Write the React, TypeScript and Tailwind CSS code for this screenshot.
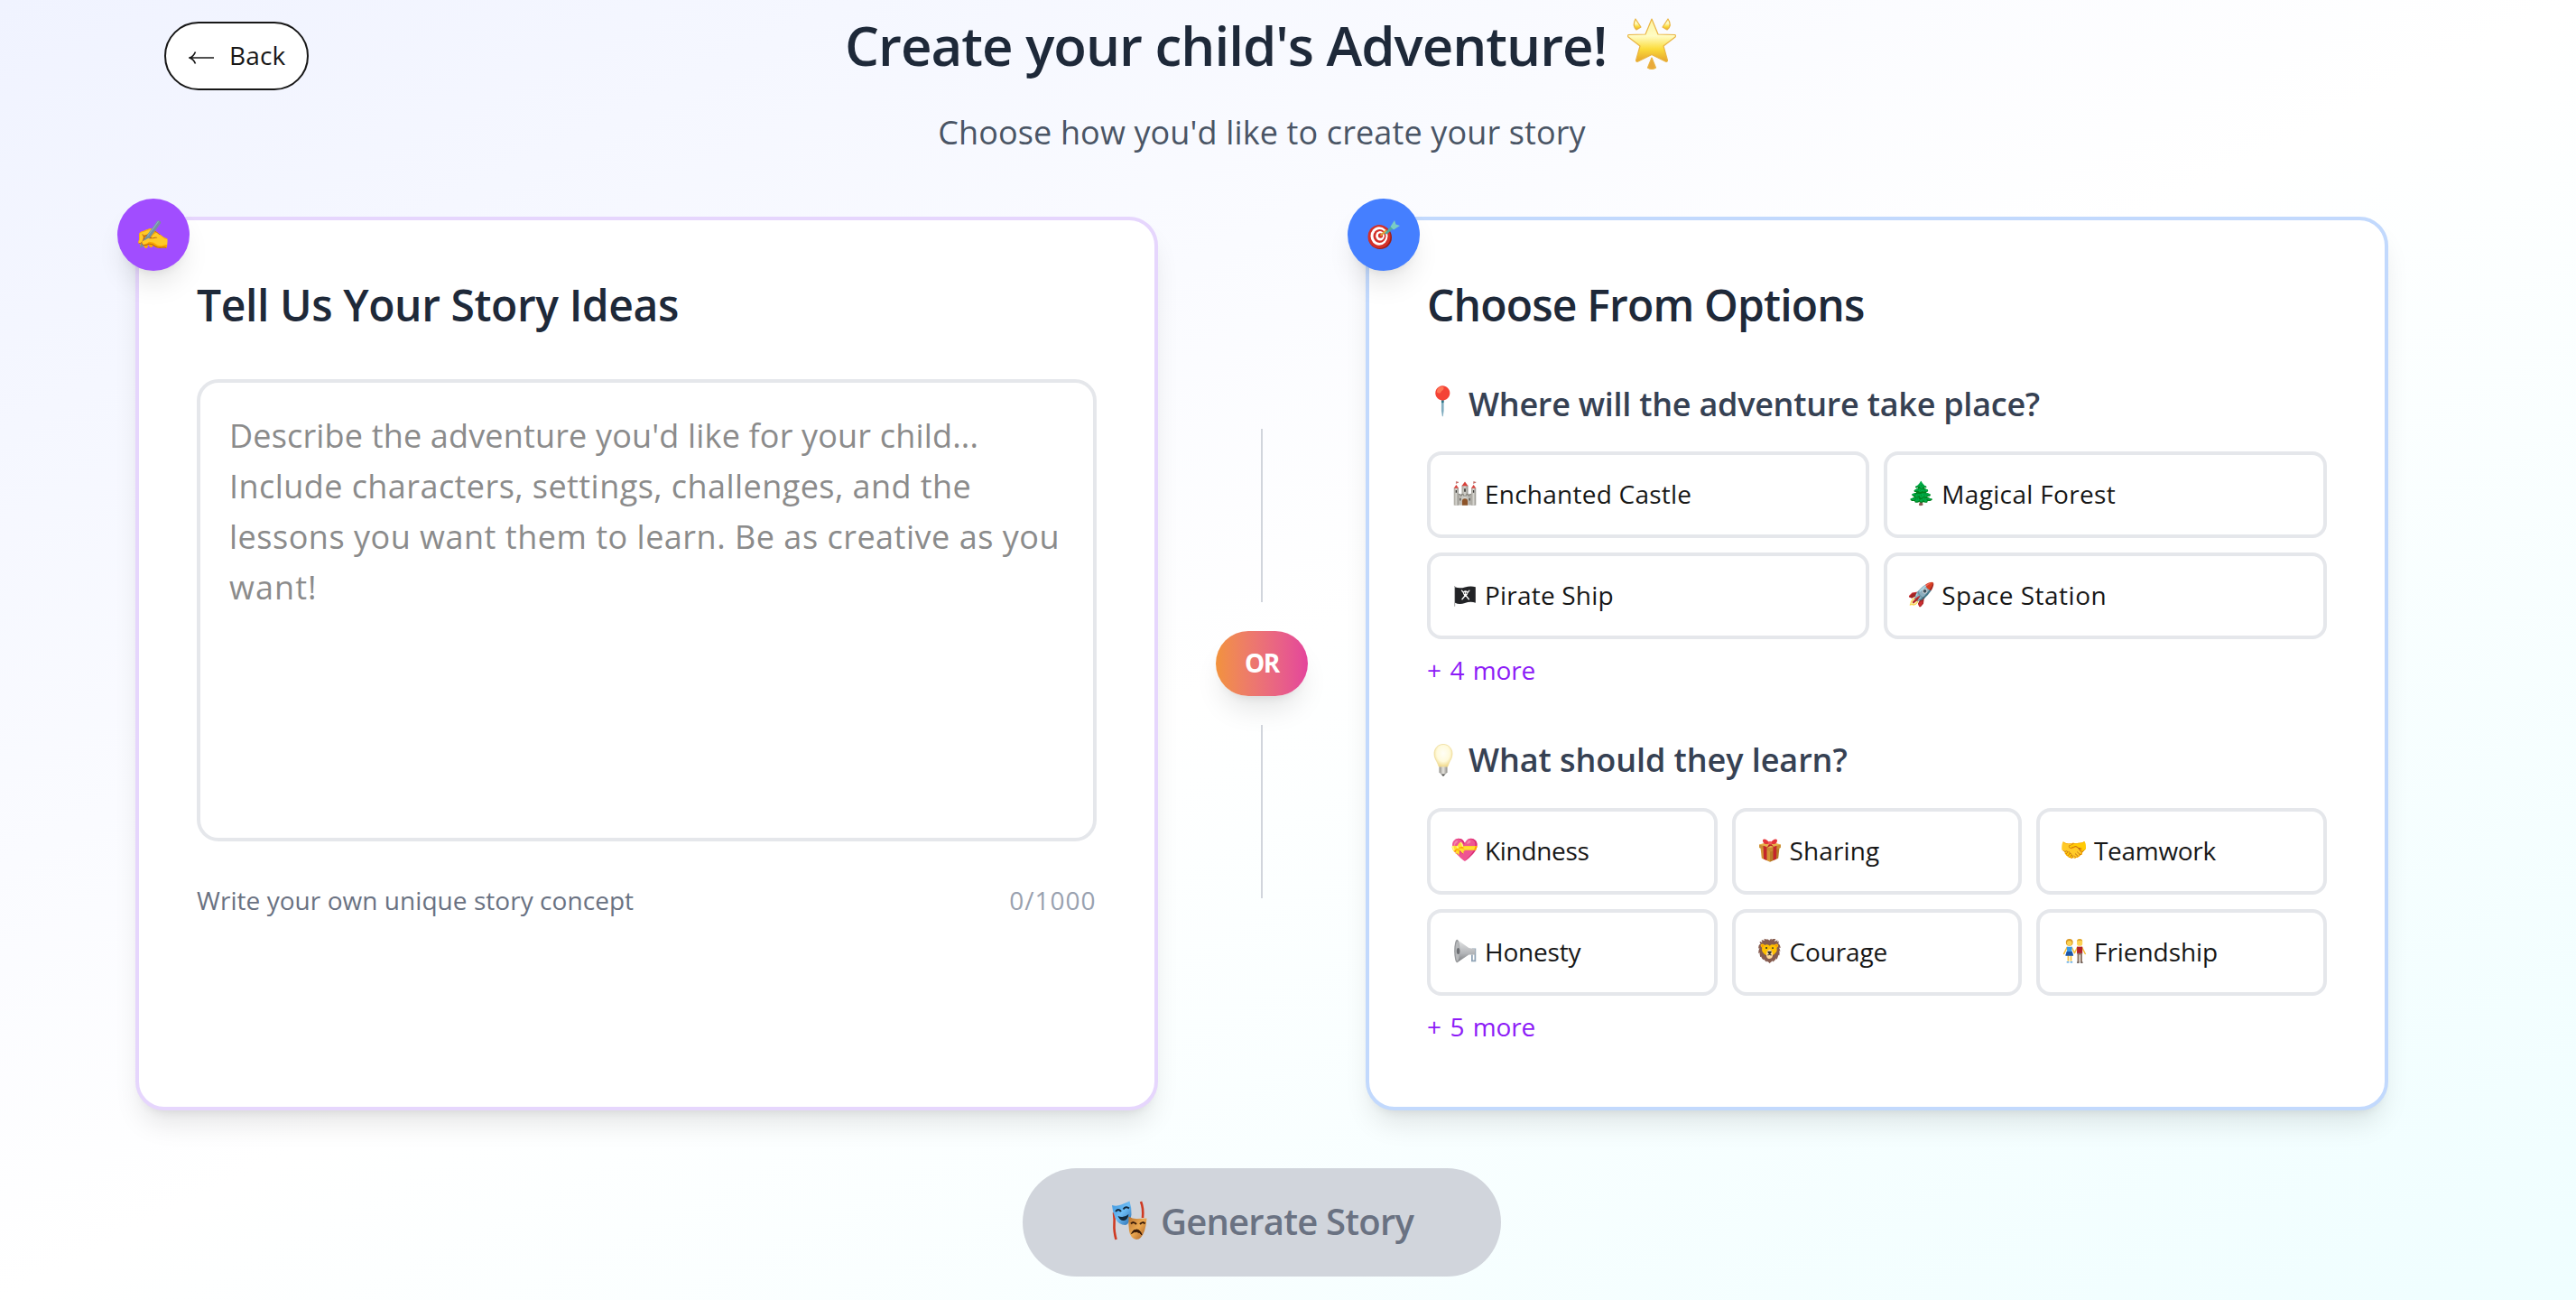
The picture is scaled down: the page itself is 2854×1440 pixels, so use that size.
import type { ReactNode } from "react";

const cardShadow = "shadow-[0_20px_30px_-6px_rgba(0,0,0,0.1),0_8px_12px_-8px_rgba(0,0,0,0.1)]";

/* ---------- Icons ---------- */

function StarIcon() {
  return (
    <svg viewBox="0 0 60 60" className="h-[60px] w-[60px] shrink-0">
      <defs>
        <linearGradient id="star" x1="0" y1="0" x2="0" y2="1">
          <stop offset="0" stopColor="#fdf3a0" />
          <stop offset="0.4" stopColor="#fffcc4" />
          <stop offset="0.7" stopColor="#fbdc3c" />
          <stop offset="1" stopColor="#e5a32c" />
        </linearGradient>
      </defs>
      <g fill="url(#star)" stroke="#eab543" strokeWidth="1.2" strokeLinejoin="round">
        <path d="M30 3 L37 20 L56 20.500 Q57 22 56 23 L43 33 L47.500 49 Q47 51 45 50 L30 42.500 L15 50 Q13 51 12.500 49 L17 33 L4 23 Q3 22 4 20.500 L23 20 Z" />
        <path d="M12 3 L18 12 L13 15 Q8 10 12 3 Z" />
        <path d="M48 3 L42 12 L47 15 Q53 10 48 3 Z" />
        <path d="M30 46 L34.500 57 Q30 60 25.500 57 Z" fill="#e9a93b" />
      </g>
    </svg>
  );
}

function CastleIcon() {
  return (
    <svg viewBox="0 0 32 32" className="h-[31px] w-[31px]">
      <defs>
        <linearGradient id="stone" x1="0" x2="1">
          <stop offset="0" stopColor="#a5a29a" />
          <stop offset="0.5" stopColor="#d6d5cf" />
          <stop offset="1" stopColor="#8f8d87" />
        </linearGradient>
      </defs>
      <g fill="url(#stone)">
        <rect x="3" y="17" width="26" height="14" />
        <rect x="2" y="9" width="6" height="22" />
        <rect x="24" y="9" width="6" height="22" />
        <rect x="12" y="6" width="8" height="12" />
      </g>
      <path d="M8 17h2v2h2v-2h2v2h4v-2h2v2h2v-2h2" fill="none" stroke="#7d7b75" strokeWidth="1" />
      <path d="M2 9.500 5 5l3 4.500zM24 9.500 27 5l3 4.500zM12 6.500 16 1l4 5.500z" fill="#d8403a" />
      <path d="M5 4V1l3 1-3 1.200M27 4V1l3 1-3 1.200" fill="#e8605a" stroke="#a0504a" strokeWidth="0.500" />
      <path d="M12.500 31v-5a3.500 3.500 0 0 1 7 0v5z" fill="#8d5429" />
      <path d="M15 10h2v4h-2zM4.200 12h1.500v3H4.200zM26.200 12h1.500v3h-1.500zM9.500 22h1.300v3H9.500zM21.200 22h1.300v3h-1.300z" fill="#3f3e3b" />
    </svg>
  );
}

function PirateFlagIcon() {
  return (
    <svg viewBox="0 0 32 32" className="h-[29px] w-[29px]">
      <path d="M3 5v26" stroke="#b9b9b9" strokeWidth="1.400" />
      <path d="M3.500 6.500Q9 9 16 6.800T29.500 6.500v20Q23 24.500 16 26.800T3.500 26.500z" fill="#222326" />
      <path d="m12 11 9 11M21.500 11l-9 11" stroke="#fff" strokeWidth="1.500" strokeLinecap="round" />
      <circle cx="16.700" cy="14" r="3" fill="#fff" />
      <rect x="15" y="15.500" width="3.400" height="3.400" rx="1" fill="#fff" />
      <circle cx="15.500" cy="14.200" r="0.900" fill="#222" />
      <circle cx="18" cy="14.200" r="0.900" fill="#222" />
    </svg>
  );
}

function BulbIcon() {
  return (
    <svg viewBox="0 0 36 40" className="h-[40px] w-[36px]">
      <defs>
        <radialGradient id="glow" cx="0.5" cy="0.4" r="0.6">
          <stop offset="0" stopColor="#fffef6" />
          <stop offset="0.6" stopColor="#fffadb" />
          <stop offset="1" stopColor="#f0d888" />
        </radialGradient>
        <linearGradient id="cap" x1="0" x2="1">
          <stop offset="0" stopColor="#8d8b86" />
          <stop offset="0.5" stopColor="#e8e6e0" />
          <stop offset="1" stopColor="#8d8b86" />
        </linearGradient>
      </defs>
      <path d="M18 2.500c6 0 10 4.700 10 10.500 0 5-2.700 7.500-4 11-.600 1.600-.700 3.500-2 3.500h-8c-1.300 0-1.400-1.900-2-3.500-1.300-3.500-4-6-4-11C8 7.200 12 2.500 18 2.500z" fill="url(#glow)" stroke="#efdc9c" strokeWidth="0.800" />
      <path d="M13.500 27.500h9v6l-2 2h-5l-2-2z" fill="url(#cap)" />
      <path d="M15.500 35.500h5L18 38z" fill="#4d4c49" />
    </svg>
  );
}

function GiftIcon() {
  return (
    <svg viewBox="0 0 32 32" className="h-[31px] w-[31px]">
      <path d="M4 13l12 4v14L5.500 26.500z" fill="#d39537" />
      <path d="M28 13l-12 4v14l10.500-4.500z" fill="#b97a26" />
      <path d="M2.500 9 16 5l13.500 4v4L16 18 2.500 13z" fill="#e6b04c" />
      <path d="M2.500 9 16 13.500 29.500 9v4L16 18 2.500 13z" fill="#c98b31" />
      <path d="M7.500 10.700l4.500 1.500V29l-4-1.700zM20 12.200l4.500-1.500-.500 16.600-4 1.700z" fill="#c4262b" />
      <path d="M16 8C12 1 6 1 7 5s5 4 9 3c4 1 8 1 9-3s-5-4-9 3z" fill="#e5343a" />
      <path d="M16 7l5 5-4-1.500L12 13z" fill="#b91f26" />
      <circle cx="16" cy="7" r="2.200" fill="#f0575a" />
    </svg>
  );
}

function MegaphoneIcon() {
  return (
    <svg viewBox="0 0 32 32" className="h-[31px] w-[31px]">
      <defs>
        <linearGradient id="horn" x1="0" y1="0" x2="0" y2="1">
          <stop offset="0" stopColor="#e4e5e6" />
          <stop offset="0.6" stopColor="#b3b5b8" />
          <stop offset="1" stopColor="#77797c" />
        </linearGradient>
      </defs>
      <path d="M25 13.500h4v15h-4v-8" fill="none" stroke="#8fa3b5" strokeWidth="2" />
      <path d="M6 1.500 21 12l8 1.500v7L21 20.500 6 30.500z" fill="url(#horn)" />
      <ellipse cx="6" cy="16" rx="3.500" ry="14.500" fill="#97999c" />
      <ellipse cx="6.500" cy="16" rx="2.500" ry="12.500" fill="#b7b9bb" />
      <ellipse cx="7.500" cy="16" rx="2" ry="4" fill="#6c6e72" />
    </svg>
  );
}

function FriendsIcon() {
  return (
    <svg viewBox="0 0 32 32" className="h-[30px] w-[30px]">
      <path d="M7 12 3 20M13 12l3.500 7M20 12l-3.500 7M26 12l4 8" stroke="#f5bf3c" strokeWidth="1.800" strokeLinecap="round" />
      <path d="M8.500 21v8M12 21v8" stroke="#f5bf3c" strokeWidth="2" />
      <path d="M6.500 30.500h3M11 30.500h3" stroke="#5ba8e6" strokeWidth="1.800" />
      <path d="M6.500 11h7l-.5 5 2 6h-10l2-6z" fill="#3a9ae8" />
      <path d="M6.600 17h6.800l1.600 5.500H5z" fill="#1f56a5" />
      <circle cx="10" cy="5.500" r="4.500" fill="#d99823" />
      <circle cx="10" cy="6.500" r="3.200" fill="#fcd253" />
      <path d="M19.500 11h7v9h-7z" fill="#b3202a" />
      <path d="M20 19h6.200v11.500h-2.400V21h-1.400v9.500H20z" fill="#8d7464" />
      <path d="M19.500 31h3M24 31h3" stroke="#4c3a32" strokeWidth="1.400" />
      <rect x="19.500" y="1.500" width="7" height="8.500" rx="3" fill="#fcd253" />
      <path d="M19.500 4.500q0-3.500 3.500-3.500t3.500 3.500l-1-1.200h-5z" fill="#e0a82e" />
    </svg>
  );
}

function MasksIcon() {
  return (
    <svg viewBox="0 0 44 46" className="h-[46px] w-[44px] shrink-0">
      <defs>
        <linearGradient id="blueMask" x1="0" y1="0" x2="1" y2="1">
          <stop offset="0" stopColor="#3b93dc" />
          <stop offset="0.5" stopColor="#6dbcf4" />
          <stop offset="1" stopColor="#2a6cae" />
        </linearGradient>
        <linearGradient id="goldMask" x1="0" y1="0" x2="1" y2="1">
          <stop offset="0" stopColor="#b8722f" />
          <stop offset="0.5" stopColor="#eba951" />
          <stop offset="1" stopColor="#a4571e" />
        </linearGradient>
      </defs>
      <path d="M4 14q1 8 .5 14t2 16" fill="none" stroke="#cf3a22" strokeWidth="2.600" />
      <path d="M34 2q3 7 2 18" fill="none" stroke="#cf3a22" strokeWidth="2.600" />
      <path d="M2 6q5 1.500 10-.5t9.500-4q2.500 8 2 15-1.500 10-6.500 11.500Q9 28 5.500 20 2.500 13 2 6z" fill="url(#blueMask)" />
      <path d="M6 13q3-4 6 0M14.500 10.500q3-4 6.500-1" fill="none" stroke="#12293d" strokeWidth="2" />
      <path d="M8.500 18q7 2.500 12-2-1 6.500-5.500 7-4 .500-6.500-5z" fill="#12293d" />
      <path d="M20.500 18.500q5 3 9.500 2.500t10.500-.5q-.5 8-2.500 14-3.500 9.500-9 9.500-6.500-1-8-9.500-1-8-.500-16z" fill="url(#goldMask)" />
      <path d="M23 26.500q3-3 6 .5M33 27q3-3.500 5.500-.5" fill="none" stroke="#3a1c08" strokeWidth="2" />
      <path d="M23.500 37.500q2-5 6-4.500t5.500 6q-2-3-5.500-3.500t-6 2z" fill="#3a1c08" stroke="#3a1c08" />
    </svg>
  );
}

function DartIcon() {
  return (
    <svg viewBox="0 0 38 34" className="h-[34px] w-[38px]">
      <ellipse cx="15" cy="20" rx="13" ry="13" fill="#9c1d16" />
      <ellipse cx="14" cy="19" rx="12.500" ry="13" fill="#d3302a" />
      <ellipse cx="14" cy="18.500" rx="9.500" ry="10.200" fill="#fff" />
      <ellipse cx="14.500" cy="18.500" rx="7" ry="7.600" fill="#d3302a" />
      <ellipse cx="15" cy="18.200" rx="4.800" ry="5.200" fill="#fff" />
      <ellipse cx="15.500" cy="18" rx="2.600" ry="2.800" fill="#d3302a" />
      <path d="M15.500 18 22 12" stroke="#e0a030" strokeWidth="2" />
      <path d="M20 15.500 28 6.500l2.500 2.500-8 7.500z" fill="#4fa9a3" />
      <path d="M26.500 8 31 1l1.500 4.500L37 7l-7 4.500z" fill="#7accc4" />
    </svg>
  );
}

function Emoji({ children }: { children: string }) {
  return (
    <span className="font-['Noto_Color_Emoji',sans-serif] text-[25px] leading-none tracking-normal">
      {children}
    </span>
  );
}

/* ---------- Building blocks ---------- */

type OptionItem = { icon: ReactNode; label: string; spacing: string };

const places: OptionItem[] = [
  { icon: <CastleIcon />, label: "Enchanted Castle", spacing: "tracking-[0.24px]" },
  { icon: <Emoji>🌲</Emoji>, label: "Magical Forest", spacing: "tracking-[0.34px]" },
  { icon: <PirateFlagIcon />, label: "Pirate Ship", spacing: "tracking-[0.2px]" },
  { icon: <Emoji>🚀</Emoji>, label: "Space Station", spacing: "tracking-[0.5px]" },
];

const lessons: OptionItem[] = [
  { icon: <Emoji>💝</Emoji>, label: "Kindness", spacing: "tracking-[-0.32px]" },
  { icon: <GiftIcon />, label: "Sharing", spacing: "tracking-[0.12px]" },
  { icon: <Emoji>🤝</Emoji>, label: "Teamwork", spacing: "tracking-[-0.3px]" },
  { icon: <MegaphoneIcon />, label: "Honesty", spacing: "tracking-[-0.2px]" },
  { icon: <Emoji>🦁</Emoji>, label: "Courage", spacing: "tracking-[-0.14px]" },
  { icon: <FriendsIcon />, label: "Friendship", spacing: "tracking-[-0.06px]" },
];

const placeholderLines = [
  { text: "Describe the adventure you'd like for your child...", spacing: "tracking-[0.17px]" },
  { text: "Include characters, settings, challenges, and the", spacing: "tracking-[0.44px]" },
  { text: "lessons you want them to learn. Be as creative as you", spacing: "tracking-[0.51px]" },
  { text: "want!", spacing: "tracking-[1.05px]" },
];

function OptionButton({ icon, label, spacing }: OptionItem) {
  return (
    <button className="flex h-24 items-start gap-2 rounded-2xl border-4 border-[#e5e7eb] bg-white px-6 pt-[22px] text-[28px] leading-10 text-[#171717]">
      <span className="flex h-10 w-7 shrink-0 items-center justify-center">{icon}</span>
      <span className={`pt-px ${spacing}`}>{label}</span>
    </button>
  );
}

function MoreButton({ children }: { children: ReactNode }) {
  return (
    <button className="mt-3.5 block text-[28px] leading-10 tracking-[-0.2px] text-[#8d1bf7] [word-spacing:2.5px]">
      {children}
    </button>
  );
}

function Card({
  border,
  badge,
  badgeIcon,
  title,
  titleSpacing,
  children,
}: {
  border: string;
  badge: string;
  badgeIcon: ReactNode;
  title: string;
  titleSpacing: string;
  children: ReactNode;
}) {
  return (
    <section className={`relative h-[990px] w-[1132.5px] rounded-[32px] border-4 bg-white px-16 pt-[65px] ${border} ${cardShadow}`}>
      <div className={`absolute -top-6 -left-6 flex h-20 w-20 items-center justify-center rounded-full ${badge} ${cardShadow}`}>
        {badgeIcon}
      </div>
      <h2 className={`text-[48px] leading-[58px] font-semibold text-[#1e2939] ${titleSpacing}`}>{title}</h2>
      {children}
    </section>
  );
}

export default function App() {
  return (
    <div className="h-[1440px] overflow-hidden bg-[linear-gradient(to_bottom_right,#f0f3ff,#ffffff_50%,#effeff)] font-['Open_Sans',sans-serif]">
      <main className="w-[2796px]">
        <header className="grid h-[240px] grid-cols-[342px_1fr_342px] items-start">
          <button className="mt-6 ml-[182px] flex h-[76px] items-start rounded-full border-2 border-[#171717] bg-white pt-[15px] pl-[25px] text-[28px] leading-10 text-[#171717]">
            <svg viewBox="0 0 28 16" className="mt-[15px] mr-[17px] h-4 w-7" fill="none" stroke="#171717" strokeWidth="1.6">
              <path d="M1.500 8H28M7.500 1.500Q5.500 6.500 1 8q4.500 1.500 6.500 6.500" />
            </svg>
            <span className="tracking-[0.15px]">Back</span>
          </button>
          <div className="pt-[13px]">
            <div className="flex h-[72px] justify-center">
              <h1 className="w-[864px] text-[60px] leading-[74px] font-semibold tracking-[-1px] whitespace-nowrap text-[#1e2939]">
                Create your child's Adventure!
              </h1>
              <div className="pt-[5px]">
                <StarIcon />
              </div>
            </div>
            <p className="mt-[34px] text-center text-[36px] leading-[56px] tracking-[0.13px] text-[#4a5565]">
              Choose how you'd like to create your story
            </p>
          </div>
        </header>

        <div className="flex pl-[150px]">
          <Card
            border="border-[#e6d6fd]"
            badge="bg-[#a14dff]"
            badgeIcon={
              <span className="font-['Noto_Color_Emoji',sans-serif] text-[31px] leading-none">✍️</span>
            }
            title="Tell Us Your Story Ideas"
            titleSpacing="tracking-[-0.41px]"
          >
            <div className="mt-[53px] h-[512px] rounded-3xl border-4 border-[#e5e7eb] px-8 pt-[31px] text-[36px] leading-[56px] whitespace-nowrap text-[#8b8b8b]">
              {placeholderLines.map((line) => (
                <p key={line.text} className={line.spacing}>
                  {line.text}
                </p>
              ))}
            </div>
            <div className="mt-[45px] flex justify-between text-[28px] leading-10">
              <span className="tracking-[0.05px] text-[#6a7282]">Write your own unique story concept</span>
              <span className="tracking-[1px] text-[#99a1af]">0/1000</span>
            </div>
          </Card>

          <div className="flex w-[230.5px] flex-col items-center gap-8 pt-[235px]">
            <div className="h-48 w-0.5 bg-[#d1d5dc]" />
            <div className={`flex h-[72px] w-[102px] justify-center rounded-full bg-linear-to-r from-[#f2923b] to-[#e4449b] pt-[15px] text-[28px] leading-10 font-bold tracking-[-1.6px] text-white ${cardShadow}`}>
              OR
            </div>
            <div className="h-48 w-0.5 bg-[#d1d5dc]" />
          </div>

          <Card
            border="border-[#c2d9fd]"
            badge="bg-[#457fff]"
            badgeIcon={<DartIcon />}
            title="Choose From Options"
            titleSpacing="tracking-[-0.82px]"
          >
            <h3 className="mt-[53px] flex gap-[10px] text-[36px] leading-[56px] font-semibold tracking-[-0.26px] text-[#364153]">
              <span className="flex w-9 justify-center pt-[9px] font-['Noto_Color_Emoji',sans-serif] text-[31px] leading-none tracking-normal">📍</span>
              Where will the adventure take place?
            </h3>
            <div className="mt-6 grid grid-cols-2 gap-4">
              {places.map((item) => (
                <OptionButton key={item.label} {...item} />
              ))}
            </div>
            <MoreButton>+ 4 more</MoreButton>

            <h3 className="mt-[52px] flex gap-[10px] text-[36px] leading-[56px] font-semibold tracking-[-0.07px] text-[#364153]">
              <span className="flex w-9 pt-2">
                <BulbIcon />
              </span>
              What should they learn?
            </h3>
            <div className="mt-[25px] grid grid-cols-3 gap-4">
              {lessons.map((item) => (
                <OptionButton key={item.label} {...item} />
              ))}
            </div>
            <MoreButton>+ 5 more</MoreButton>
          </Card>
        </div>

        <div className="mt-16 flex justify-center">
          <button className="flex h-[120px] w-[530px] items-start justify-center gap-3 rounded-full bg-[#d1d5dc] pt-[31px] text-[40px] leading-[56px] font-semibold tracking-[-0.79px] text-[#6a7282]">
            <span className="pt-[4px]">
              <MasksIcon />
            </span>
            Generate Story
          </button>
        </div>
      </main>
    </div>
  );
}
